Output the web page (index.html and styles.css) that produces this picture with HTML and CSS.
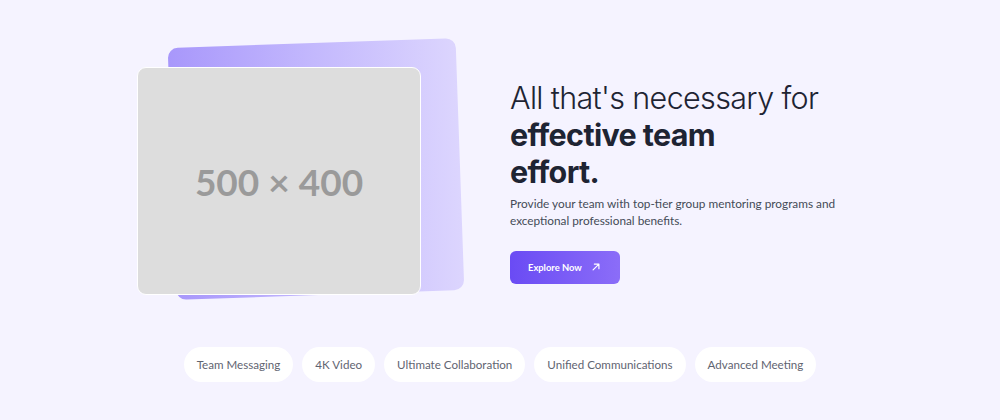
FILE: index.html
```html
<!DOCTYPE html>
<html lang="en">
<head>
<meta charset="utf-8">
<title>Team effort</title>
<link rel="stylesheet" href="styles.css">
</head>
<body>
<main class="page">
  <section class="hero">
    <div class="media">
      <div class="media-back"></div>
      <div class="media-front"><span class="placeholder">500 × 400</span></div>
    </div>
    <div class="copy">
      <h1 class="title"><span class="light">All that's necessary for</span><br><strong>effective team</strong><br><strong>effort.</strong></h1>
      <p class="lead">Provide your team with top-tier group mentoring programs and exceptional professional benefits.</p>
      <a class="btn" href="#">Explore Now
        <svg class="btn-icon" viewBox="0 0 12 12" width="10" height="10" aria-hidden="true"><path d="M2.5 9.5 L9.5 2.5 M4 2.5 H9.5 V8" fill="none" stroke="currentColor" stroke-width="1.4" stroke-linecap="round" stroke-linejoin="round"/></svg>
      </a>
    </div>
  </section>
  <ul class="tags">
    <li class="tag">Team Messaging</li>
    <li class="tag">4K Video</li>
    <li class="tag">Ultimate Collaboration</li>
    <li class="tag">Unified Communications</li>
    <li class="tag">Advanced Meeting</li>
  </ul>
</main>
</body>
</html>
```
FILE: styles.css
```css
* { box-sizing: border-box; }
html, body { margin: 0; padding: 0; }
body {
  background: #f5f3ff;
  font-family: "Lato", "Liberation Sans", sans-serif;
  color: #1f2533;
  width: 1000px;
  height: 420px;
  overflow: hidden;
}
.page {
  padding-top: 67px;
}
.hero {
  display: flex;
  align-items: center;
  padding-left: 137px;
  gap: 45px;
}
.media {
  position: relative;
  width: 328px;
  flex: none;
}
.media-back {
  position: absolute;
  left: 35px;
  top: -24px;
  width: 288px;
  height: 252px;
  border-radius: 10px;
  background: linear-gradient(90deg, #a897fb 0%, #c3b8fd 50%, #dcd5fe 100%);
  transform: rotate(-2deg);
}
.media-front {
  position: relative;
  width: 284px;
  height: 228px;
  background: #dddddd;
  border: 1.5px solid #ffffff;
  border-radius: 9px;
  display: flex;
  align-items: center;
  justify-content: center;
}
.placeholder {
  font-family: "Lato", sans-serif;
  font-weight: 700;
  font-size: 37px;
  color: #9a9a9a;
  padding-top: 1px;
}
.copy {
  width: 352px;
  flex: none;
}
.title {
  margin: 0;
  font-family: "Inter", "Liberation Sans", sans-serif;
  font-size: 30.5px;
  line-height: 37px;
  font-weight: 700;
  color: #1e2433;
  letter-spacing: -0.65px;
}
.title .light { font-weight: 300; }
.title strong { font-weight: 700; }
.lead {
  margin: 5px 0 0;
  font-size: 11.8px;
  line-height: 17px;
  color: #444b57;
}
.btn {
  margin-top: 22px;
  display: inline-flex;
  align-items: center;
  gap: 9px;
  height: 33px;
  padding: 0 19px 0 18px;
  border-radius: 6px;
  background: linear-gradient(90deg, #6a4bf4 0%, #8b6df8 100%);
  color: #ffffff;
  font-size: 9.4px;
  font-weight: 700;
  text-decoration: none;
}
.btn-icon { display: block; }
.tags {
  list-style: none;
  margin: 52px 0 0;
  padding: 0;
  display: flex;
  justify-content: center;
  gap: 9px;
}
.tag {
  height: 35px;
  display: flex;
  align-items: center;
  padding: 0 13px;
  border-radius: 18px;
  background: #ffffff;
  font-size: 11.6px;
  color: #5f6471;
}
```
